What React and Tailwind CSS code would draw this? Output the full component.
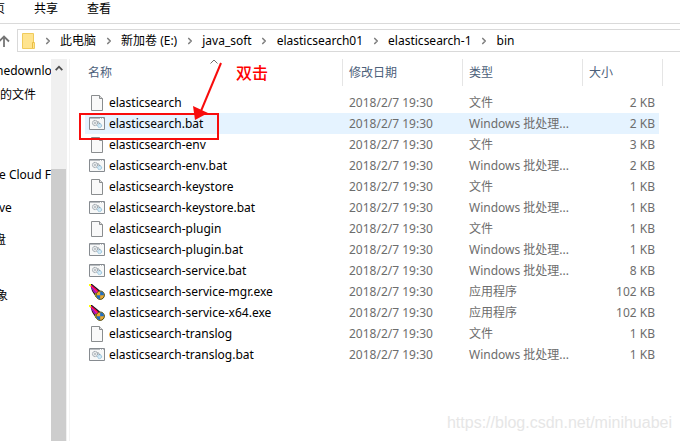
import { ChevronRight } from "lucide-react";

const menus = ["页", "共享", "查看"];

const crumbs = [
  "此电脑",
  "新加卷 (E:)",
  "java_soft",
  "elasticsearch01",
  "elasticsearch-1",
  "bin",
];

const places = [
  { label: "nedownlo", className: "-ml-1" },
  { label: "的文件", className: "" },
  { label: "e Cloud F", className: "mt-[56px] -ml-px" },
  { label: "ve", className: "mt-[9px] -ml-px" },
  { label: "盘", className: "mt-2 -ml-1.5" },
  { label: "象", className: "mt-8 -ml-1" },
];

const kinds = {
  file: "文件",
  bat: "Windows 批处理...",
  exe: "应用程序",
};

const files = [
  { name: "elasticsearch", kind: "file", size: "2 KB" },
  { name: "elasticsearch.bat", kind: "bat", size: "2 KB", selected: true },
  { name: "elasticsearch-env", kind: "file", size: "3 KB" },
  { name: "elasticsearch-env.bat", kind: "bat", size: "2 KB" },
  { name: "elasticsearch-keystore", kind: "file", size: "1 KB" },
  { name: "elasticsearch-keystore.bat", kind: "bat", size: "1 KB" },
  { name: "elasticsearch-plugin", kind: "file", size: "1 KB" },
  { name: "elasticsearch-plugin.bat", kind: "bat", size: "1 KB" },
  { name: "elasticsearch-service.bat", kind: "bat", size: "8 KB" },
  { name: "elasticsearch-service-mgr.exe", kind: "exe", size: "102 KB" },
  { name: "elasticsearch-service-x64.exe", kind: "exe", size: "102 KB" },
  { name: "elasticsearch-translog", kind: "file", size: "1 KB" },
  { name: "elasticsearch-translog.bat", kind: "bat", size: "1 KB" },
];

function FolderIcon() {
  return (
    <svg width="13" height="16" viewBox="0 0 13 16" aria-hidden="true">
      <path d="M.5.5h11v9h1v6H.5z" fill="#ffe48f" stroke="#f0cb5c" />
      <path d="M10.5 15V9.5H12" fill="none" stroke="#e9bd45" />
    </svg>
  );
}

function FileIcon() {
  return (
    <svg width="16" height="16" viewBox="0 0 16 16" aria-hidden="true">
      <path d="M2.5.5h8l3 3v12h-11z" fill="#f9f9f9" stroke="#8a8d8f" />
      <path d="M10.5.5v3h3" fill="#dcdcdc" stroke="#8a8d8f" />
    </svg>
  );
}

function BatIcon() {
  return (
    <svg width="16" height="16" viewBox="0 0 16 16" aria-hidden="true">
      <path d="M.5 1.5h15v12H.5z" fill="#f7f8f8" stroke="#868b90" />
      <path d="M1 2h14v1H1z" fill="#b9bdc1" />
      <path d="M11 2h1v1h-1zM13 2h1v1h-1z" fill="#fff" />
      <circle cx="6" cy="7" r="2.6" fill="#e6e9eb" stroke="#8b949c" strokeDasharray="1.3 .5" />
      <circle cx="6" cy="7" r=".8" fill="#8b949c" />
      <circle cx="10.600" cy="9.600" r="2" fill="#d3ebf8" stroke="#8dbcd8" strokeDasharray="1.3 .4" />
      <path d="M8.500 5.500c1.500.5 2 1.300 2.200 2.600" fill="none" stroke="#8b949c" />
    </svg>
  );
}

function ExeIcon() {
  return (
    <svg width="16" height="16" viewBox="0 0 16 16" aria-hidden="true">
      <path d="M1 0h2l8 6.500-4.500 6L3 7z" fill="#1a1420" />
      <path d="m1.500 1.500 1-.5 8 7-3 3.500L4 7z" fill="#ff1493" />
      <path d="m3 4 5 6.500" stroke="#7a1bd0" strokeWidth="1.200" />
      <path d="m3 2 7 6" stroke="#e8101c" />
      <path d="M0 0h2v2H0z" fill="#ff0" />
      <circle cx="11.200" cy="11.200" r="4.200" fill="#f0a92a" stroke="#4a4a12" />
      <path d="M11.200 7.500a3.700 3.700 0 0 1 3.700 3.700h-3.700zM11.200 11.200v3.700a3.700 3.700 0 0 1-3.700-3.700z" fill="#1f6fc4" />
      <path d="M6 9h1v4H6zM7 13h1v1H7z" fill="#8f9018" />
    </svg>
  );
}

const icons = { file: FileIcon, bat: BatIcon, exe: ExeIcon };

function Toolbar() {
  return (
    <header>
      <nav className="flex gap-[29px] border-b border-[#dadada] pb-[5px] leading-[18px]">
        {menus.map((m) => (
          <button key={m} className="first:-ml-[7px]">
            {m}
          </button>
        ))}
      </nav>

      <div className="mt-[5px] flex items-center">
        <button aria-label="Up" className="w-[17px] shrink-0">
          <svg width="10" height="12" viewBox="0 0 10 12" aria-hidden="true">
            <path d="M4 12V2M-1 6.500 4 1.500l5 5" fill="none" stroke="#757575" strokeWidth="1.800" />
          </svg>
        </button>
        <div className="flex h-[23px] flex-1 items-center overflow-hidden border-y border-l border-[#d9d9d9] pl-1 whitespace-nowrap">
          <FolderIcon />
          {crumbs.map((c) => (
            <div key={c} className="flex items-center">
              <span className="flex w-[25px] justify-center">
                <ChevronRight size={10} strokeWidth={4} color="#808080" />
              </span>
              <a href="#" className="leading-[20px]">
                {c}
              </a>
            </div>
          ))}
        </div>
      </div>
    </header>
  );
}

function Sidebar() {
  return (
    <aside className="flex w-[70px] shrink-0 border-r border-[#f3f3f3]">
      <ul className="w-[51px] overflow-hidden whitespace-nowrap">
        {places.map((p) => (
          <li key={p.label} className={p.className}>
            <a href="#" className="block leading-[24px]">
              {p.label}
            </a>
          </li>
        ))}
      </ul>
      <div className="flex w-4 flex-col bg-[#f0f0f0]">
        <button aria-label="Scroll up" className="flex h-[110px] justify-center pt-[6px]">
          <svg width="8" height="6" viewBox="0 0 8 6" aria-hidden="true">
            <path d="m.7 5.200 3.300-3.500 3.300 3.500" fill="none" stroke="#505050" strokeWidth="1.800" />
          </svg>
        </button>
        <div className="mr-px flex-1 bg-[#cdcdcd]" />
      </div>
    </aside>
  );
}

function HeaderCell({ children, sorted, className }) {
  return (
    <th scope="col" className="h-[33px] p-0 align-top font-normal">
      <div
        className={`relative h-[27px] border-r border-[#e5e5e5] text-left leading-[27px] text-[#4c607a] ${className}`}
      >
        {children}
        {sorted && (
          <svg
            className="absolute top-0 left-1/2 -translate-x-1/2"
            width="8"
            height="5"
            viewBox="0 0 8 5"
            aria-hidden="true"
          >
            <path d="m.5 4.500 3.500-3.500 3.500 3.500" fill="none" stroke="#707070" />
          </svg>
        )}
      </div>
    </th>
  );
}

function FileRow({ file }) {
  const Icon = icons[file.kind];
  const bg = file.selected ? "bg-[#e5f3ff]" : "";

  return (
    <tr className="whitespace-nowrap text-[#6d6d6d]">
      <td className="p-0">
        <div className={`flex h-[21px] items-center gap-1 pl-1 text-black ${bg}`}>
          <Icon />
          {file.name}
        </div>
      </td>
      <td className="p-0">
        <div className={`h-[21px] pl-[6px] leading-[21px] ${bg}`}>2018/2/7 19:30</div>
      </td>
      <td className="p-0">
        <div className={`h-[21px] pl-[6px] leading-[21px] ${bg}`}>{kinds[file.kind]}</div>
      </td>
      <td className="p-0">
        <div className={`mr-1 h-[21px] pr-1 text-right leading-[21px] ${bg}`}>{file.size}</div>
      </td>
    </tr>
  );
}

function FileList() {
  return (
    <main className="min-w-0 flex-1 pl-[15px]">
      <table className="w-[578px] table-fixed border-collapse">
        <colgroup>
          <col />
          <col className="w-[120px]" />
          <col className="w-[120px]" />
          <col className="w-[80px]" />
        </colgroup>
        <thead>
          <tr>
            <HeaderCell sorted className="pl-[3px]">名称</HeaderCell>
            <HeaderCell className="pl-[6px]">修改日期</HeaderCell>
            <HeaderCell className="pl-[6px]">类型</HeaderCell>
            <HeaderCell className="pl-[6px]">大小</HeaderCell>
          </tr>
        </thead>
        <tbody>
          {files.map((f) => (
            <FileRow key={f.name} file={f} />
          ))}
        </tbody>
      </table>
    </main>
  );
}

export default function App() {
  return (
    <div className="relative flex min-h-screen flex-col overflow-hidden bg-white font-['Noto_Sans','Noto_Sans_CJK_SC',sans-serif] text-[12px] text-black">
      <Toolbar />
      <div className="mt-[7px] flex flex-1">
        <Sidebar />
        <FileList />
      </div>

      {/* Red annotations over the list */}
      <div className="pointer-events-none absolute top-[113px] left-[79px] h-[27px] w-[140px] border-2 border-[#f80c0c]" />
      <svg
        className="pointer-events-none absolute top-[62px] left-[192px]"
        width="32"
        height="60"
        viewBox="0 0 32 60"
        aria-hidden="true"
      >
        <path d="M29 1 9 49" stroke="#f80c0c" strokeWidth="2" />
        <path d="M1 44 16 51 3 58z" fill="#f80c0c" />
      </svg>
      <span className="absolute top-[62px] left-[236px] text-[16px] leading-[22px] font-medium text-[#ff0000]">
        双击
      </span>

      <span className="absolute right-2 bottom-2 font-['Liberation_Sans',sans-serif] text-[16px] leading-[20px] text-[#e6e6e6]">
        https://blog.csdn.net/minihuabei
      </span>
    </div>
  );
}
